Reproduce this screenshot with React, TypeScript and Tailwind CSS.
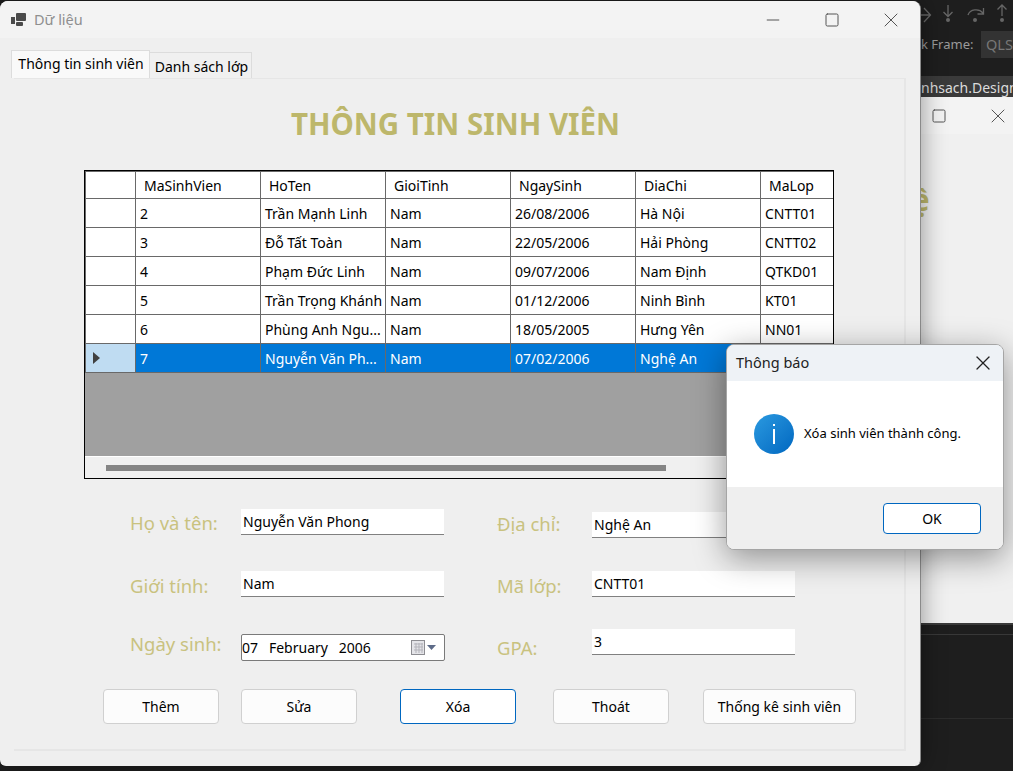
import { Minus, Square, X } from 'lucide-react';

const columns = [
  { name: 'MaSinhVien', width: 'w-[125px]' },
  { name: 'HoTen', width: 'w-[125px]' },
  { name: 'GioiTinh', width: 'w-[125px]' },
  { name: 'NgaySinh', width: 'w-[125px]' },
  { name: 'DiaChi', width: 'w-[125px]' },
  { name: 'MaLop', width: 'w-[72px]' },
];

const rows = [
  ['2', 'Trần Mạnh Linh', 'Nam', '26/08/2006', 'Hà Nội', 'CNTT01'],
  ['3', 'Đỗ Tất Toàn', 'Nam', '22/05/2006', 'Hải Phòng', 'CNTT02'],
  ['4', 'Phạm Đức Linh', 'Nam', '09/07/2006', 'Nam Định', 'QTKD01'],
  ['5', 'Trần Trọng Khánh', 'Nam', '01/12/2006', 'Ninh Bình', 'KT01'],
  ['6', 'Phùng Anh Ngu...', 'Nam', '18/05/2005', 'Hưng Yên', 'NN01'],
  ['7', 'Nguyễn Văn Ph...', 'Nam', '07/02/2006', 'Nghệ An', 'CNTT01'],
];

function WindowIcon() {
  return (
    <svg width="16" height="16" viewBox="0 0 16 16" className="text-[#4a4a4a]">
      <rect x="0" y="5" width="4" height="7" fill="currentColor" />
      <rect x="5" y="1" width="10" height="8" rx="1" fill="currentColor" />
      <rect x="5" y="10" width="7" height="4" rx="1" fill="currentColor" />
    </svg>
  );
}

function CalendarIcon() {
  return (
    <svg width="26" height="18" viewBox="0 0 26 18">
      <rect x="0.5" y="1.5" width="13" height="14" fill="#e4e4e8" stroke="#8d8d92" />
      <path d="M3 5h9M3 8h9M3 11h9M5 4v10M8 4v10M11 4v10" stroke="#b3b3ba" strokeWidth="1" fill="none" />
      <path d="M16 6h9l-4.5 5z" fill="#5d6b88" />
    </svg>
  );
}

function InfoIcon() {
  return (
    <div className="w-10 h-10 rounded-full bg-gradient-to-br from-[#2a9ae0] to-[#0067c0] flex flex-col items-center justify-center gap-[3px] shrink-0">
      <span className="w-[2px] h-[2px] bg-white" />
      <span className="w-[2px] h-[15px] bg-white" />
    </div>
  );
}

// debugger toolbar glyphs of the IDE, dimmed behind the windows
function DebugIcons() {
  return (
    <svg width="92" height="27" viewBox="0 0 92 27" fill="none" stroke="#666" strokeWidth="1.3">
      <path d="M-6 15h15M3 8l6.500 7-6.500 7" />
      <path d="M27 5v11M22.500 12l4.500 4.500 4.500-4.500" />
      <circle cx="27" cy="20" r="2" fill="#666" stroke="none" />
      <path d="M47 15c2-6 11-7 15-2M62.500 8v6h-6" />
      <circle cx="54" cy="20" r="2" fill="#666" stroke="none" />
      <path d="M81 16V5M76.500 9.500L81 5l4.500 4.500" />
      <circle cx="81" cy="20" r="2" fill="#666" stroke="none" />
    </svg>
  );
}

function Field({ label, value, labelClass, inputClass }: { label: string; value: string; labelClass: string; inputClass: string }) {
  return (
    <>
      <span className={`text-[#c9c27f] text-[18.5px] leading-6 ${labelClass}`}>{label}</span>
      <div className={`bg-white border-b border-[#808080] h-[26px] w-[203px] pl-[2px] text-[14px] leading-[25px] text-black ${inputClass}`}>{value}</div>
    </>
  );
}

function PushButton({ text, width, focused }: { text: string; width: string; focused?: boolean }) {
  return (
    <button className={`h-[35px] ${width} rounded-[4px] border text-[14px] text-black ${focused ? 'bg-white border-[#0067c0]' : 'bg-[#fcfcfc] border-[#d0d0d0]'}`}>
      {text}
    </button>
  );
}

function DataGrid() {
  return (
    <div className="w-[750px] h-[309px] ml-[70px] mt-[26px] border border-black bg-[#a0a0a0] flex flex-col text-[14px] text-black shrink-0">
      <div className="flex h-[28px] bg-white border-y border-[#696969]">
        <div className="w-[51px] border-x border-[#696969]" />
        {columns.map(c => (
          <div key={c.name} className={`${c.width} pl-[8px] leading-[27px] border-r border-[#696969] last:border-r-0`}>{c.name}</div>
        ))}
      </div>
      {rows.map((row, i) => {
        const selected = i === rows.length - 1;
        return (
          <div key={row[0]} className={`flex h-[29px] border-b border-[#696969] ${selected ? 'bg-[#0078d7] text-white' : 'bg-white'}`}>
            <div className={`w-[51px] border-x border-[#696969] flex items-center pl-[7px] ${selected ? 'bg-[#bfdcf2]' : 'bg-white'}`}>
              {selected && <span className="w-0 h-0 border-y-[6px] border-y-transparent border-l-[7px] border-l-[#404040]" />}
            </div>
            {row.map((cell, j) => (
              <div key={j} className={`${columns[j].width} pl-[4px] leading-[29px] border-r border-[#696969] last:border-r-0 whitespace-nowrap overflow-hidden`}>{cell}</div>
            ))}
          </div>
        );
      })}
      <div className="flex-1" />
      <div className="h-[22px] bg-[#f0f0f0] border-t border-white flex items-center pl-[21px]">
        <div className="w-[560px] h-[6px] bg-[#858585]" />
      </div>
    </div>
  );
}

function MainWindow() {
  return (
    <div className="absolute left-0 top-[1px] w-[921px] h-[765px] rounded-t-[8px] rounded-b-[6px] bg-[#efefef] border-r border-[#8a8a8a] shadow-[0_0_26px_rgba(0,0,0,0.4)] flex flex-col z-10">
      <div className="h-[37px] bg-[#f3f3f3] rounded-t-[8px] flex items-center shrink-0">
        <div className="ml-[11px] mr-[7px] flex"><WindowIcon /></div>
        <span className="text-[14.5px] text-[#8f8f8f] flex-1">Dữ liệu</span>
        <Minus size={20} strokeWidth={1.2} className="text-[#555] mr-[41px]" />
        <Square size={16} strokeWidth={1.5} className="text-[#555] mr-[39px]" />
        <X size={24} strokeWidth={1} className="text-[#555] mr-[17px]" />
      </div>
      <div className="flex items-end pl-[11px] mt-[12px] h-[28px] shrink-0 text-[14px] text-black">
        <div className="h-[28px] w-[139px] pl-[1px] bg-[#f9f9f9] border border-b-0 border-[#dcdcdc] text-center leading-[25px]">Thông tin sinh viên</div>
        <div className="h-[26px] w-[102px] pl-[2px] bg-[#f0f0f0] border border-l-0 border-b-0 border-[#dcdcdc] text-center leading-[27px]">Danh sách lớp</div>
      </div>
      <div className="w-[892px] h-[673px] ml-[14px] border-2 border-[#e6e6e6] border-t border-l-0 flex flex-col">
        <h1 className="mt-[25px] text-center text-[29.5px] font-bold leading-[40px] text-[#bdb76b] pr-[7px]">THÔNG TIN SINH VIÊN</h1>
        <DataGrid />

        {/* Form */}
        <div className="flex mt-[30px] h-[177px]">
          <div className="w-[367px] ml-[116px] grid grid-cols-[111px_1fr] content-start shrink-0">
            <Field label="Họ và tên:" value="Nguyễn Văn Phong" labelClass="mt-[2px]" inputClass="" />
            <Field label="Giới tính:" value="Nam" labelClass="mt-[39px]" inputClass="mt-[36px]" />
            <span className="text-[#c9c27f] text-[18.5px] leading-6 mt-[34px]">Ngày sinh:</span>
            <div className="mt-[36px] w-[204px] h-[27px] bg-white border border-[#7a7a7a] rounded-[2px] flex items-center justify-between pr-[7px] text-[14px] text-black">
              <span className="whitespace-pre">07   February   2006</span>
              <CalendarIcon />
            </div>
          </div>
          <div className="grid grid-cols-[95px_1fr] content-start">
            <Field label="Địa chỉ:" value="Nghệ An" labelClass="mt-[3px]" inputClass="mt-[3px]" />
            <Field label="Mã lớp:" value="CNTT01" labelClass="mt-[36px]" inputClass="mt-[33px]" />
            <Field label="GPA:" value="3" labelClass="mt-[38px]" inputClass="mt-[31px]" />
          </div>
        </div>

        {/* Buttons */}
        <div className="flex ml-[89px] mt-[3px]">
          <PushButton text="Thêm" width="w-[116px]" />
          <div className="w-[22px]" />
          <PushButton text="Sửa" width="w-[116px]" />
          <div className="w-[43px]" />
          <PushButton text="Xóa" width="w-[116px]" focused />
          <div className="w-[37px]" />
          <PushButton text="Thoát" width="w-[116px]" />
          <div className="w-[34px]" />
          <PushButton text="Thống kê sinh viên" width="w-[153px]" />
        </div>
      </div>
    </div>
  );
}

function MessageBox() {
  return (
    <div className="absolute left-[726px] top-[344px] w-[278px] h-[206px] rounded-[8px] border border-[#a5a5a5] overflow-hidden flex flex-col z-20 bg-white shadow-[0_8px_32px_rgba(0,0,0,0.4)]">
      <div className="h-[36px] bg-[#eef2f6] flex items-center justify-between pl-[9px] pr-[8px] text-[14.5px] text-[#222]">
        <span>Thông báo</span>
        <X size={24} strokeWidth={1.25} className="text-[#222]" />
      </div>
      <div className="h-[106px] flex items-center gap-[10px] pl-[27px] text-[13px] text-black">
        <InfoIcon />
        <span>Xóa sinh viên thành công.</span>
      </div>
      <div className="flex-1 bg-[#efefef] flex justify-end items-start pt-[16px] pr-[22px]">
        <button className="w-[98px] h-[31px] rounded-[4px] bg-white border border-[#0067c0] text-[14px] text-black">OK</button>
      </div>
    </div>
  );
}

export default function App() {
  return (
    <div className="relative w-[1013px] h-[771px] overflow-hidden bg-[#1e1e1e] font-['Noto_Sans',sans-serif]">
      {/* IDE behind the windows */}
      <div className="absolute left-[921px] top-0 w-[92px] h-[771px] flex flex-col">
        <div className="h-[27px] flex"><DebugIcons /></div>
        <div className="h-[27px] mt-[4px] mb-[18px] flex items-center text-[13px] text-[#9a9a9a] whitespace-nowrap">
          <span className="w-[60px] shrink-0">k Frame:</span>
          <div className="h-[27px] w-[32px] shrink-0 overflow-hidden bg-[#333333] pl-[5px] text-[14.5px] leading-[27px] text-[#777]">QLS</div>
        </div>
        <div className="h-[21px] bg-[#3a3a3a] text-[14px] leading-[24px] text-[#dcdcdc] whitespace-nowrap overflow-hidden">nhsach.Design</div>
        <div className="h-[526px] bg-[#f0f0f0] flex flex-col shrink-0 overflow-hidden">
          <div className="h-[37px] bg-[#f3f3f3] flex items-center shrink-0">
            <Square size={16} strokeWidth={1.5} className="text-[#555] ml-[10px]" />
            <X size={24} strokeWidth={1} className="text-[#555] ml-[39px]" />
          </div>
          <span className="-ml-[9px] mt-[46px] text-[29.5px] font-bold leading-[40px] text-[#bdb76b]">ệ</span>
        </div>
        <div className="h-[2px] bg-[#3a3a3a]" />
        <div className="h-[9px]" />
        <div className="h-[1px] bg-[#383838]" />
        <div className="h-[83px]" />
        <div className="h-[1px] bg-[#2c2c2c]" />
      </div>
      <MainWindow />
      <MessageBox />
    </div>
  );
}
